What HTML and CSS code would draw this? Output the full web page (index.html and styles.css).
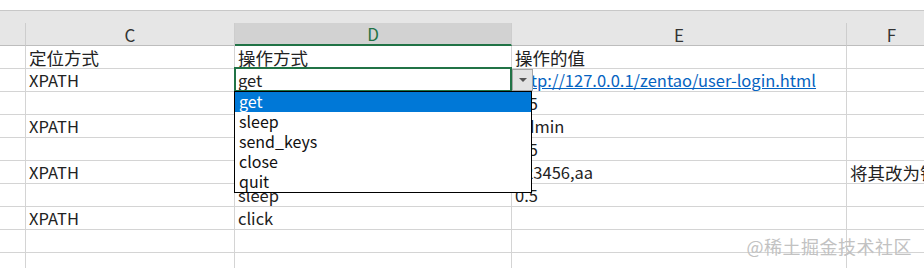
FILE: index.html
```html
<!DOCTYPE html>
<html lang="zh-CN">
<head>
  <meta charset="UTF-8" />
  <title>用例表</title>
  <link rel="stylesheet" href="styles.css">
</head>
<body>

  <div class="topbar"></div>
  <div class="band"></div>

  <div class="sheet">
    <!-- column headers -->
    <div class="colhead corner"></div>
    <div class="colhead">C</div>
    <div class="colhead active">D</div>
    <div class="colhead">E</div>
    <div class="colhead">F</div>

    <!-- row 1 -->
    <div class="rowhead"></div>
    <div class="cell cjk">定位方式</div>
    <div class="cell cjk">操作方式</div>
    <div class="cell cjk">操作的值</div>
    <div class="cell"></div>

    <!-- row 2 -->
    <div class="rowhead"></div>
    <div class="cell">XPATH</div>
    <div class="cell current">
      get
      <div class="frame"></div>
      <div class="drop-btn"><span class="arrow"></span></div>
      <ul class="drop-list">
        <li class="picked">get</li>
        <li>sleep</li>
        <li>send_keys</li>
        <li>close</li>
        <li>quit</li>
      </ul>
    </div>
    <div class="cell"><a class="link" href="#">http://127.0.0.1/zentao/user-login.html</a></div>
    <div class="cell"></div>

    <!-- rows 3-6: column D is hidden under the open list -->
    <div class="rowhead"></div>
    <div class="cell"></div>
    <div class="cell"></div>
    <div class="cell">0.5</div>
    <div class="cell"></div>

    <div class="rowhead"></div>
    <div class="cell">XPATH</div>
    <div class="cell"></div>
    <div class="cell">admin</div>
    <div class="cell"></div>

    <div class="rowhead"></div>
    <div class="cell"></div>
    <div class="cell"></div>
    <div class="cell">0.5</div>
    <div class="cell"></div>

    <div class="rowhead"></div>
    <div class="cell">XPATH</div>
    <div class="cell"></div>
    <div class="cell">123456,aa</div>
    <div class="cell cjk">将其改为错误</div>

    <!-- row 7 -->
    <div class="rowhead"></div>
    <div class="cell"></div>
    <div class="cell">sleep</div>
    <div class="cell">0.5</div>
    <div class="cell"></div>

    <!-- row 8 -->
    <div class="rowhead"></div>
    <div class="cell">XPATH</div>
    <div class="cell">click</div>
    <div class="cell"></div>
    <div class="cell"></div>

    <!-- rows 9-10 -->
    <div class="rowhead"></div>
    <div class="cell"></div>
    <div class="cell"></div>
    <div class="cell"></div>
    <div class="cell"></div>

    <div class="rowhead"></div>
    <div class="cell"></div>
    <div class="cell"></div>
    <div class="cell"></div>
    <div class="cell"></div>
  </div>

  <div class="watermark">@稀土掘金技术社区</div>

</body>
</html>
```

FILE: styles.css
```css
    :root {
      --grid-line: #d4d4d4;
      --head-bg: #e6e6e6;
      --head-active: #d2d2d2;
      --excel-green: #217346;
    }

    * {
      box-sizing: border-box;
    }

    html, body {
      margin: 0;
      height: 100%;
      overflow: hidden;
    }

    body {
      background: #ffffff;
      font-family: 'Noto Sans CJK SC', sans-serif;
      font-size: 16.5px;
      color: #222;
      position: relative;
    }

    .topbar {
      height: 11px;
      background: #ffffff;
      border-bottom: 1px solid #c8c8c8;
    }

    .band {
      height: 12px;
      background: var(--head-bg);
    }

    .sheet {
      display: grid;
      grid-template-columns: 26px 209px 277px 335px 90px;
      grid-auto-rows: 23px;
    }

    .colhead {
      background: var(--head-bg);
      border-right: 1px solid #cdcdcd;
      border-bottom: 1px solid #bdbdbd;
      display: flex;
      align-items: center;
      justify-content: center;
      font-size: 17px;
      color: #333;
    }

    .colhead.active {
      background: var(--head-active);
      border-bottom: 2px solid var(--excel-green);
      color: var(--excel-green);
    }

    .rowhead {
      border-right: 1px solid var(--grid-line);
      border-bottom: 1px solid var(--grid-line);
    }

    .cell {
      border-right: 1px solid var(--grid-line);
      border-bottom: 1px solid var(--grid-line);
      padding: 0 0 1px 3px;
      display: flex;
      align-items: flex-end;
      white-space: nowrap;
      overflow: hidden;
      line-height: 19px;
    }

    .cell.cjk {
      font-size: 17.5px;
      line-height: 20px;
      padding-bottom: 0;
    }

    .link {
      color: #0563c1;
      text-decoration: underline;
    }

    .cell.current {
      position: relative;
      z-index: 5;
      overflow: visible;
    }

    .frame {
      position: absolute;
      top: -2px;
      left: -1px;
      right: -1px;
      bottom: -1px;
      border: 2px solid var(--excel-green);
      pointer-events: none;
    }

    .drop-btn {
      position: absolute;
      top: 0;
      left: 277px;
      width: 21px;
      height: 22px;
      background: #e3e3e3;
      border: 1px solid #a6a6a6;
      display: flex;
      align-items: center;
      justify-content: center;
    }

    .arrow {
      width: 0;
      height: 0;
      border-left: 4px solid transparent;
      border-right: 4px solid transparent;
      border-top: 4px solid #555;
    }

    .drop-list {
      position: absolute;
      top: 22px;
      left: -1px;
      width: 298px;
      height: 102px;
      margin: 0;
      padding: 0;
      list-style: none;
      background: #ffffff;
      border: 1px solid #000;
      font-size: 16px;
    }

    .drop-list li {
      height: 20px;
      line-height: 19px;
      padding-left: 4px;
      color: #111;
    }

    .drop-list li.picked {
      background: #0078d7;
      color: #ffffff;
    }

    .watermark {
      position: absolute;
      right: 12px;
      bottom: 9px;
      font-size: 18px;
      color: #c2c2c2;
      letter-spacing: 0.5px;
    }
```
